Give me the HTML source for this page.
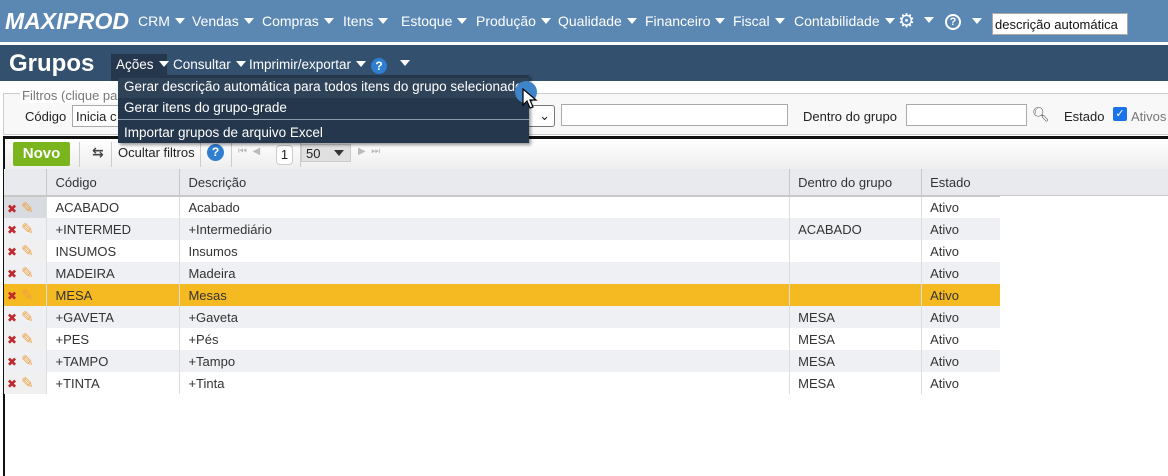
<!DOCTYPE html>
<html><head><meta charset="utf-8"><style>
*{box-sizing:border-box;margin:0;padding:0}
body{width:1168px;height:476px;overflow:hidden;background:#fff;font-family:"Liberation Sans","DejaVu Sans",sans-serif;font-size:13px;color:#222;position:relative}
.abs{position:absolute}
.top{left:0;top:0;width:1168px;height:42px;background:#5b87b3}
.top .logo{left:5px;top:8px;font:italic bold 23px "Liberation Sans",sans-serif;color:#fff;letter-spacing:0}
.menu{top:13px;color:#fff;font-size:14px;white-space:nowrap}
.tri{display:inline-block;width:0;height:0;border-left:5px solid transparent;border-right:5px solid transparent;border-top:6px solid #fff;vertical-align:middle;margin-left:5px;margin-top:-3px}
.bar2{left:0;top:45px;width:1168px;height:36px;background:#34506f}
.bar2 .t{left:9px;top:5px;font-size:24px;font-weight:bold;color:#fff}
.m2{top:12px;color:#fff;font-size:13.5px;white-space:nowrap}
.dd{left:118px;top:75px;width:411px;height:68px;background:#25374c;box-shadow:2px 2px 3px rgba(0,0,0,.4);color:#fff;font-size:13.5px}
.dd div{position:absolute;left:6px}
input{font-family:inherit}
.box{border:1px solid #aaa;background:#fff}
table{border-collapse:collapse;position:absolute;left:4px;top:169px}
td{height:22px;padding:0 0 0 8px;font-size:13px;color:#333;border-right:1px solid #ddd;white-space:nowrap}
th{height:27px;background:#e8eaee;font-weight:normal;text-align:left;padding-left:8px;border-right:1px solid #c8c8c8;border-bottom:2px solid #c8c8c8;color:#333}
tr.g td{background:#eef0f3}
tr.y td{background:#f5b921}
.ic{padding:0 0 0 3px;width:43px;background:#f0f0f0}
.x{color:#c0282d;font-weight:bold;font-size:12px}
.p{color:#f0a040;font-size:15px;margin-left:4px}
</style></head><body>
<div class="abs top">
<div class="abs logo">MAXIPROD</div>
<div class="abs menu" style="left:138px">CRM<span class="tri"></span></div>
<div class="abs menu" style="left:192px">Vendas<span class="tri"></span></div>
<div class="abs menu" style="left:262px">Compras<span class="tri"></span></div>
<div class="abs menu" style="left:343px">Itens<span class="tri"></span></div>
<div class="abs menu" style="left:401px">Estoque<span class="tri"></span></div>
<div class="abs menu" style="left:476px">Produção<span class="tri"></span></div>
<div class="abs menu" style="left:558px">Qualidade<span class="tri"></span></div>
<div class="abs menu" style="left:645px">Financeiro<span class="tri"></span></div>
<div class="abs menu" style="left:733px">Fiscal<span class="tri"></span></div>
<div class="abs menu" style="left:794px">Contabilidade<span class="tri"></span></div>
<div class="abs menu" style="left:898px;top:10px;font-size:19px">⚙<span class="tri" style="margin-left:9px"></span></div>
<div class="abs" style="left:945px;top:14px;width:16px;height:16px;border:2px solid #fff;border-radius:50%;color:#fff;font-size:11px;font-weight:bold;text-align:center;line-height:12px">?</div>
<div class="abs" style="left:967px;top:14px"><span class="tri"></span></div>
<div class="abs box" style="left:992px;top:13px;width:136px;height:22px;padding:3px 2px;font-size:13px;color:#111">descrição automática</div>
</div>
<div class="abs bar2">
<div class="abs t">Grupos</div>
<div class="abs" style="left:111px;top:9px;width:56px;height:27px;background:#25374c"></div>
<div class="abs m2" style="left:116px">Ações<span class="tri"></span></div>
<div class="abs m2" style="left:173px">Consultar<span class="tri"></span></div>
<div class="abs m2" style="left:249px">Imprimir/exportar<span class="tri"></span></div>
<div class="abs" style="left:371px;top:13px;width:16px;height:16px;border-radius:50%;background:#2f7fd0;color:#fff;font-size:12px;font-weight:bold;text-align:center;line-height:16px">?</div>
<div class="abs" style="left:395px;top:11px"><span class="tri"></span></div>
</div>
<!-- filters -->
<div class="abs" style="left:3px;top:93px;width:1170px;height:42px;border:1px solid #ccc;background:#f8f8f8"></div>
<div class="abs" style="left:20px;top:88px;color:#777;background:#fff;padding:0 2px">Filtros (clique pa</div>
<div class="abs" style="left:25px;top:109px">Código</div>
<div class="abs box" style="left:72px;top:105px;width:60px;height:22px;padding:3px 3px">Inicia c</div>
<div class="abs box" style="left:520px;top:105px;width:35px;height:22px;border-radius:3px;border-color:#777;text-align:right;padding:2px 4px">⌄</div>
<div class="abs box" style="left:561px;top:104px;width:227px;height:22px"></div>
<div class="abs" style="left:803px;top:109px">Dentro do grupo</div>
<div class="abs box" style="left:906px;top:104px;width:121px;height:22px"></div>
<div class="abs" style="left:1032px;top:106px;color:#555;font-size:14px">🔍︎</div>
<div class="abs" style="left:1064px;top:109px">Estado</div>
<div class="abs" style="left:1113px;top:107px;width:14px;height:14px;background:#1a73e8;border-radius:2px;color:#fff;font-size:11px;text-align:center;line-height:14px">✓</div>
<div class="abs" style="left:1131px;top:109px;color:#777">Ativos</div>
<!-- toolbar -->
<div class="abs" style="left:3px;top:136px;width:1165px;height:3px;background:#111"></div>
<div class="abs" style="left:3px;top:136px;width:2px;height:340px;background:#111"></div>
<div class="abs" style="left:5px;top:139px;width:1163px;height:30px;background:linear-gradient(#fff,#eee)"></div>
<div class="abs" style="left:13px;top:142px;width:57px;height:24px;background:#7ab51d;border-radius:2px;color:#fff;font-weight:bold;font-size:15px;text-align:center;line-height:24px">Novo</div>
<div class="abs" style="left:79px;top:142px;width:1px;height:25px;background:#ccc"></div>
<div class="abs" style="left:92px;top:144px;font-size:14px;color:#444;font-weight:bold">⇆</div>
<div class="abs" style="left:111px;top:142px;width:1px;height:25px;background:#ccc"></div>
<div class="abs" style="left:118px;top:145px;color:#222">Ocultar filtros</div>
<div class="abs" style="left:200px;top:142px;width:1px;height:25px;background:#ccc"></div>
<div class="abs" style="left:207px;top:144px;width:17px;height:17px;border-radius:50%;background:#2f7fd0;color:#fff;font-weight:bold;font-size:12px;text-align:center;line-height:17px">?</div>
<div class="abs" style="left:231px;top:142px;width:1px;height:25px;background:#ccc"></div>
<div class="abs" style="left:238px;top:146px;color:#bbb;font-size:10px">⏮&nbsp;&nbsp;◀</div>
<div class="abs box" style="left:276px;top:145px;width:17px;height:20px;border-radius:4px;text-align:center;line-height:18px;border-color:#ccc">1</div>
<div class="abs" style="left:300px;top:142px;width:1px;height:25px;background:#ccc"></div>
<div class="abs" style="left:301px;top:144px;width:50px;height:18px;background:#e0e0e0;border:1px solid #ccc;padding:1px 4px">50<span class="tri" style="border-top-color:#333;margin-left:14px"></span></div>
<div class="abs" style="left:358px;top:146px;color:#bbb;font-size:10px">▶&nbsp;&nbsp;⏭</div>
<table>
<tr><th style="width:43px;padding:0"></th><th style="width:133px">Código</th><th style="width:610px">Descrição</th><th style="width:132px">Dentro do grupo</th><th style="width:246px;border-right:none">Estado</th></tr>
<tr><td class="ic" style="background:#d8dbe0"><span class="x">✖</span><span class="p">✎</span></td><td>ACABADO</td><td>Acabado</td><td></td><td>Ativo</td></tr>
<tr class="g"><td class="ic"><span class="x">✖</span><span class="p">✎</span></td><td>+INTERMED</td><td>+Intermediário</td><td>ACABADO</td><td>Ativo</td></tr>
<tr><td class="ic"><span class="x">✖</span><span class="p">✎</span></td><td>INSUMOS</td><td>Insumos</td><td></td><td>Ativo</td></tr>
<tr class="g"><td class="ic"><span class="x">✖</span><span class="p">✎</span></td><td>MADEIRA</td><td>Madeira</td><td></td><td>Ativo</td></tr>
<tr class="y"><td class="ic"><span class="x">✖</span><span class="p">✎</span></td><td>MESA</td><td>Mesas</td><td></td><td>Ativo</td></tr>
<tr class="g"><td class="ic"><span class="x">✖</span><span class="p">✎</span></td><td>+GAVETA</td><td>+Gaveta</td><td>MESA</td><td>Ativo</td></tr>
<tr><td class="ic"><span class="x">✖</span><span class="p">✎</span></td><td>+PES</td><td>+Pés</td><td>MESA</td><td>Ativo</td></tr>
<tr class="g"><td class="ic"><span class="x">✖</span><span class="p">✎</span></td><td>+TAMPO</td><td>+Tampo</td><td>MESA</td><td>Ativo</td></tr>
<tr><td class="ic"><span class="x">✖</span><span class="p">✎</span></td><td>+TINTA</td><td>+Tinta</td><td>MESA</td><td>Ativo</td></tr>
</table>
<div class="abs" style="left:1000px;top:196px;width:168px;height:200px;background:#fff"></div>
<!-- dropdown -->
<div class="abs dd">
<div style="top:3px;left:0;width:411px;height:20px;background:#2e4258"></div>
<div style="top:4px">Gerar descrição automática para todos itens do grupo selecionado</div>
<div style="top:25px">Gerar itens do grupo-grade</div>
<div style="top:44px;left:0;width:411px;height:1px;background:#8a9aab"></div>
<div style="top:50px">Importar grupos de arquivo Excel</div>
</div>
<div class="abs" style="left:515px;top:81px;width:22px;height:22px;border-radius:50%;background:#3f84c9"></div>
<svg class="abs" style="left:522px;top:88px" width="16" height="22" viewBox="0 0 16 22"><path d="M1 1 L1 17 L5 13 L8 20 L11 19 L8 12 L14 12 Z" fill="#fff" stroke="#000" stroke-width="1.2"/></svg>
</body></html>
